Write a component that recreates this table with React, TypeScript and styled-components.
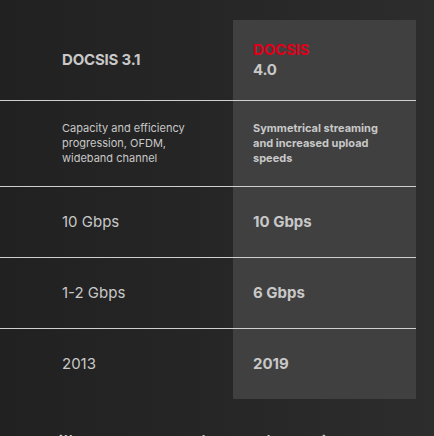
import styled, { createGlobalStyle } from 'styled-components';

const GlobalStyle = createGlobalStyle`
  html, body {
    margin: 0;
    padding: 0;
    background: linear-gradient(to right, #212121 0%, #262626 50%, #2d2d2d 100%);
    font-family: Inter, "Liberation Sans", sans-serif;
    color: #c8c8c8;
    min-height: 436px;
    overflow: hidden;
  }
`;

const Page = styled.div`
  padding-top: 20px;
`;

const Table = styled.div`
  width: 416px;
  display: flex;
  flex-direction: column;
`;

const Row = styled.div<{ $height: number; $last?: boolean }>`
  display: grid;
  grid-template-columns: 233px 183px;
  height: ${({ $height }) => $height}px;
  border-bottom: ${({ $last }) => ($last ? 'none' : '1px solid #cfcfcf')};
`;

const Cell = styled.div<{ $highlight?: boolean }>`
  display: flex;
  flex-direction: column;
  justify-content: center;
  padding-left: ${({ $highlight }) => ($highlight ? 20 : 62)}px;
  background: ${({ $highlight }) => ($highlight ? '#404040' : 'transparent')};
  font-weight: ${({ $highlight }) => ($highlight ? 700 : 400)};
`;

const Heading = styled.div`
  font-size: 15px;
  font-weight: 700;
  line-height: 20px;
  color: #c8c8c8;
  letter-spacing: -0.2px;
`;

const Red = styled.span`
  color: #e1001a;
`;

const Small = styled.div<{ $width: number }>`
  font-size: 11px;
  line-height: 15px;
  width: ${({ $width }) => $width}px;
`;

const Value = styled.div`
  font-size: 15px;
  line-height: 20px;
`;

const Lead = styled.p`
  margin: 31px 0 0 41px;
  font-size: 21px;
  line-height: 28px;
  color: #d0d0d0;
  white-space: nowrap;
`;

const rows = [
  { old: '10 Gbps', next: '10 Gbps' },
  { old: '1-2 Gbps', next: '6 Gbps' },
  { old: '2013', next: '2019' },
];

export default function App() {
  return (
    <Page>
      <GlobalStyle />
      <Table>
        <Row $height={80}>
          <Cell>
            <Heading>DOCSIS 3.1</Heading>
          </Cell>
          <Cell $highlight>
            <Heading>
              <Red>DOCSIS</Red>
              <br />
              4.0
            </Heading>
          </Cell>
        </Row>
        <Row $height={85}>
          <Cell>
            <Small $width={140}>Capacity and efficiency progression, OFDM, wideband channel</Small>
          </Cell>
          <Cell $highlight>
            <Small $width={135}>Symmetrical streaming and increased upload speeds</Small>
          </Cell>
        </Row>
        {rows.map((r, i) => (
          <Row key={i} $height={70} $last={i === rows.length - 1}>
            <Cell>
              <Value>{r.old}</Value>
            </Cell>
            <Cell $highlight>
              <Value>{r.next}</Value>
            </Cell>
          </Row>
        ))}
      </Table>
      <Lead>will power seamless adaptation</Lead>
    </Page>
  );
}
